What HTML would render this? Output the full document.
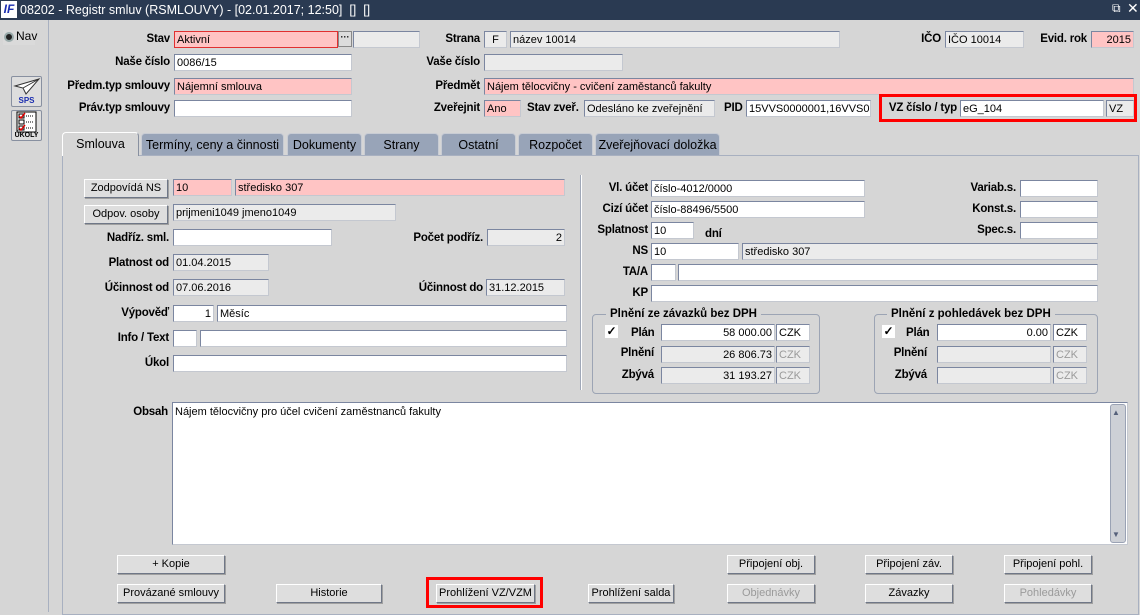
<!DOCTYPE html>
<html><head><meta charset="utf-8"><style>
*{margin:0;padding:0;box-sizing:border-box}
body{width:1140px;height:612px;background:#d6d6d6;font-family:"Liberation Sans",Arial,sans-serif;font-size:12px;color:#000;position:relative;overflow:hidden}
.a{position:absolute}
.l{position:absolute;font-weight:bold;font-size:11.5px;letter-spacing:-0.2px;white-space:nowrap;text-align:right;line-height:16px}
.f{position:absolute;height:17px;border:1px solid #7b86a0;border-right-color:#c4c8d0;border-bottom-color:#c4c8d0;background:#fff;font-size:11px;padding:0 2px;line-height:16px;white-space:nowrap;overflow:hidden}
.p{background:#ffc4c4}
.g{background:#ebebeb}
.r{text-align:right}
.b{position:absolute;height:19px;background:#dedede;border:1px solid;border-color:#fff #6f7787 #6f7787 #fff;box-shadow:1px 1px 0 #a0a0a0;text-align:center;font-size:11px;line-height:17px;white-space:nowrap}
.d{color:#9a9a9a}
.t{position:absolute;top:133px;height:22px;background:#98a4b8;border:1px solid #c8ccd4;border-bottom:none;border-radius:4px 4px 0 0;text-align:center;line-height:22px;font-size:12.5px}
.gb{position:absolute;border:1px solid #9ca4b4;border-radius:4px}
.gt{position:absolute;background:#d6d6d6;font-weight:bold;font-size:11.5px;padding:0 4px;line-height:14px}
.cb{position:absolute;width:13px;height:13px;background:#fff;font-size:12px;line-height:12px;text-align:center;font-weight:bold}
</style></head><body>
<div class="a" style="left:0;top:0;width:1140px;height:20px;background:#2a3a52"></div>
<div class="a" style="left:1px;top:1px;width:16px;height:17px;background:#fff;color:#1a2db0;font-weight:bold;font-style:italic;font-size:12px;line-height:17px;text-align:center">IF</div>
<div class="a" style="left:20px;top:2px;color:#fff;font-size:12.5px;line-height:16px">08202 - Registr smluv (RSMLOUVY) - [02.01.2017; 12:50]&nbsp; []&nbsp; []</div>
<div class="a" style="left:1112px;top:1px;color:#fff;font-size:12px">⧉</div>
<div class="a" style="left:1127px;top:0px;color:#fff;font-size:14px">✕</div>
<div class="a" style="left:48px;top:20px;width:1px;height:592px;background:#a8b0c0"></div>
<div class="a" style="left:3px;top:30px;width:32px;height:15px;background:#dadada"></div>
<div class="a" style="left:4px;top:32px;width:10px;height:10px;border-radius:50%;background:#222;border:2px solid #9aa"></div>
<div class="a" style="left:16px;top:29px;font-size:12px">Nav</div>
<div class="a" style="left:11px;top:76px;width:31px;height:31px;background:#dedede;border:1px solid #8890a0;border-radius:2px">
<svg width="29" height="20" viewBox="0 0 29 20"><path d="M3 9 L27 2 L14 17 L11 11 Z" fill="#fff" stroke="#333"/><path d="M11 11 L27 2" stroke="#333"/></svg>
<div style="position:absolute;left:0;right:0;top:19px;text-align:center;color:#1a2db0;font-size:8px;font-weight:bold">SPS</div></div>
<div class="a" style="left:11px;top:110px;width:31px;height:31px;background:#dedede;border:1px solid #8890a0;border-radius:2px">
<svg width="29" height="22" viewBox="0 0 29 22"><rect x="5" y="1" width="19" height="20" fill="#fff" stroke="#000"/><rect x="7" y="3" width="5" height="4" fill="none" stroke="#000"/><path d="M7 5 L9 7 L13 2" stroke="#d00" fill="none" stroke-width="1.5"/><rect x="7" y="9" width="5" height="4" fill="none" stroke="#000"/><rect x="7" y="15" width="5" height="4" fill="none" stroke="#000"/><path d="M7 17 L9 19 L13 14" stroke="#d00" fill="none" stroke-width="1.5"/><path d="M14 5h8M14 11h8M14 17h8" stroke="#000" stroke-dasharray="1 1"/></svg>
<div style="position:absolute;left:0;right:0;top:21px;text-align:center;font-size:7px;font-weight:bold">ÚKOLY</div></div>

<div class="l" style="right:970px;top:31px">Stav</div>
<div class="f p" style="left:174px;top:31px;width:164px;border-color:#e03030">Aktivní</div>
<div class="a" style="left:338px;top:31px;width:14px;height:16px;background:#dcdcdc;border:1px solid #888;font-size:9px;line-height:10px;text-align:center;font-weight:bold">···</div>
<div class="f g" style="left:353px;top:31px;width:67px"></div>
<div class="l" style="right:970px;top:54px">Naše číslo</div>
<div class="f" style="left:174px;top:54px;width:178px">0086/15</div>
<div class="l" style="right:970px;top:78px">Předm.typ smlouvy</div>
<div class="f p" style="left:174px;top:78px;width:178px">Nájemní smlouva</div>
<div class="l" style="right:970px;top:100px">Práv.typ smlouvy</div>
<div class="f" style="left:174px;top:100px;width:178px"></div>

<div class="l" style="right:660px;top:31px">Strana</div>
<div class="f g" style="left:484px;top:31px;width:23px;text-align:center">F</div>
<div class="f g" style="left:510px;top:31px;width:330px">název 10014</div>
<div class="l" style="right:660px;top:54px">Vaše číslo</div>
<div class="f g" style="left:484px;top:54px;width:139px"></div>
<div class="l" style="right:660px;top:78px">Předmět</div>
<div class="f p" style="left:484px;top:78px;width:650px">Nájem tělocvičny - cvičení zaměstanců fakulty</div>
<div class="l" style="right:660px;top:100px">Zveřejnit</div>
<div class="f p" style="left:484px;top:100px;width:37px">Ano</div>
<div class="l" style="left:527px;top:100px">Stav zveř.</div>
<div class="f g" style="left:584px;top:100px;width:131px">Odesláno ke zveřejnění</div>
<div class="l" style="left:724px;top:100px">PID</div>
<div class="f" style="left:746px;top:100px;width:125px">15VVS0000001,16VVS0</div>
<div class="a" style="left:879px;top:94px;width:258px;height:28px;border:3px solid #f00"></div>
<div class="l" style="right:183px;top:100px">VZ číslo / typ</div>
<div class="f" style="left:960px;top:100px;width:144px">eG_104</div>
<div class="f g" style="left:1106px;top:100px;width:28px">VZ</div>
<div class="l" style="right:199px;top:31px">IČO</div>
<div class="f g" style="left:945px;top:31px;width:79px">IČO 10014</div>
<div class="l" style="right:53px;top:31px">Evid. rok</div>
<div class="f p r" style="left:1091px;top:31px;width:43px">2015</div>

<div class="a" style="left:62px;top:155px;width:1077px;height:460px;border:1px solid #a8b0c0;background:#d6d6d6"></div>
<div class="t" style="left:62px;width:77px;background:#d6d6d6;border-color:#fff #8890a0 #d6d6d6 #fff;height:24px;top:132px">Smlouva</div>
<div class="t" style="left:141px;width:143px">Termíny, ceny a činnosti</div>
<div class="t" style="left:287px;width:75px">Dokumenty</div>
<div class="t" style="left:364px;width:75px">Strany</div>
<div class="t" style="left:441px;width:75px">Ostatní</div>
<div class="t" style="left:518px;width:75px">Rozpočet</div>
<div class="t" style="left:595px;width:125px">Zveřejňovací doložka</div>

<div class="b" style="left:84px;top:179px;width:84px">Zodpovídá NS</div>
<div class="f p" style="left:173px;top:179px;width:59px">10</div>
<div class="f p" style="left:235px;top:179px;width:330px">středisko 307</div>
<div class="b" style="left:84px;top:205px;width:84px">Odpov. osoby</div>
<div class="f g" style="left:173px;top:204px;width:223px">prijmeni1049 jmeno1049</div>
<div class="l" style="right:971px;top:230px">Nadříz. sml.</div>
<div class="f" style="left:173px;top:229px;width:159px"></div>
<div class="l" style="right:657px;top:230px">Počet podříz.</div>
<div class="f g r" style="left:487px;top:229px;width:78px">2</div>
<div class="l" style="right:971px;top:255px">Platnost od</div>
<div class="f g" style="left:173px;top:254px;width:96px">01.04.2015</div>
<div class="l" style="right:971px;top:280px">Účinnost od</div>
<div class="f g" style="left:173px;top:279px;width:96px">07.06.2016</div>
<div class="l" style="right:657px;top:280px">Účinnost do</div>
<div class="f g" style="left:486px;top:279px;width:79px">31.12.2015</div>
<div class="l" style="right:971px;top:305px">Výpověď</div>
<div class="f r" style="left:173px;top:305px;width:41px">1</div>
<div class="f" style="left:217px;top:305px;width:350px">Měsíc</div>
<div class="l" style="right:971px;top:330px">Info / Text</div>
<div class="f" style="left:173px;top:330px;width:24px"></div>
<div class="f" style="left:200px;top:330px;width:367px"></div>
<div class="l" style="right:971px;top:355px">Úkol</div>
<div class="f" style="left:173px;top:355px;width:394px"></div>
<div class="a" style="left:580px;top:175px;width:2px;height:215px;background:#fff;border-left:1px solid #a0a8b8"></div>

<div class="l" style="right:492px;top:180px">Vl. účet</div>
<div class="f" style="left:651px;top:180px;width:214px">číslo-4012/0000</div>
<div class="l" style="right:492px;top:201px">Cizí účet</div>
<div class="f" style="left:651px;top:201px;width:214px">číslo-88496/5500</div>
<div class="l" style="right:492px;top:222px">Splatnost</div>
<div class="f" style="left:651px;top:222px;width:43px">10</div>
<div class="l" style="left:705px;top:226px">dní</div>
<div class="l" style="right:492px;top:243px">NS</div>
<div class="f" style="left:651px;top:243px;width:88px">10</div>
<div class="f g" style="left:742px;top:243px;width:356px">středisko 307</div>
<div class="l" style="right:492px;top:264px">TA/A</div>
<div class="f" style="left:651px;top:264px;width:25px"></div>
<div class="f" style="left:678px;top:264px;width:420px"></div>
<div class="l" style="right:492px;top:285px">KP</div>
<div class="f" style="left:651px;top:285px;width:447px"></div>
<div class="l" style="right:124px;top:180px">Variab.s.</div>
<div class="f" style="left:1020px;top:180px;width:78px"></div>
<div class="l" style="right:124px;top:201px">Konst.s.</div>
<div class="f" style="left:1020px;top:201px;width:78px"></div>
<div class="l" style="right:124px;top:222px">Spec.s.</div>
<div class="f" style="left:1020px;top:222px;width:78px"></div>

<div class="gb" style="left:592px;top:314px;width:228px;height:80px"></div>
<div class="gt" style="left:606px;top:307px">Plnění ze závazků bez DPH</div>
<div class="cb" style="left:605px;top:325px">✓</div>
<div class="l" style="left:631px;top:325px">Plán</div>
<div class="f r" style="left:661px;top:324px;width:114px">58 000.00</div>
<div class="f" style="left:776px;top:324px;width:34px">CZK</div>
<div class="l" style="right:486px;top:345px">Plnění</div>
<div class="f g r" style="left:661px;top:346px;width:114px">26 806.73</div>
<div class="f g d" style="left:776px;top:346px;width:34px">CZK</div>
<div class="l" style="right:486px;top:367px">Zbývá</div>
<div class="f g r" style="left:661px;top:367px;width:114px">31 193.27</div>
<div class="f g d" style="left:776px;top:367px;width:34px">CZK</div>
<div class="gb" style="left:874px;top:314px;width:224px;height:80px"></div>
<div class="gt" style="left:887px;top:307px">Plnění z pohledávek bez DPH</div>
<div class="cb" style="left:882px;top:325px">✓</div>
<div class="l" style="left:906px;top:325px">Plán</div>
<div class="f r" style="left:937px;top:324px;width:114px">0.00</div>
<div class="f" style="left:1053px;top:324px;width:34px">CZK</div>
<div class="l" style="right:213px;top:345px">Plnění</div>
<div class="f g" style="left:937px;top:346px;width:114px"></div>
<div class="f g d" style="left:1053px;top:346px;width:34px">CZK</div>
<div class="l" style="right:213px;top:367px">Zbývá</div>
<div class="f g" style="left:937px;top:367px;width:114px"></div>
<div class="f g d" style="left:1053px;top:367px;width:34px">CZK</div>

<div class="l" style="right:972px;top:404px">Obsah</div>
<div class="f" style="left:172px;top:402px;width:956px;height:143px;padding-top:1px">Nájem tělocvičny pro účel cvičení zaměstnanců fakulty</div>
<div class="a" style="left:1110px;top:404px;width:16px;height:139px;background:#cdd0d6;border:1px solid #9aa2b4;border-radius:3px"></div>
<div class="a" style="left:1112px;top:408px;font-size:8px;color:#55607a">▲</div>
<div class="a" style="left:1112px;top:530px;font-size:8px;color:#55607a">▼</div>

<div class="b" style="left:117px;top:555px;width:108px">+ Kopie</div>
<div class="b" style="left:727px;top:555px;width:88px">Připojení obj.</div>
<div class="b" style="left:865px;top:555px;width:88px">Připojení záv.</div>
<div class="b" style="left:1004px;top:555px;width:88px">Připojení pohl.</div>
<div class="b" style="left:117px;top:584px;width:108px">Provázané smlouvy</div>
<div class="b" style="left:276px;top:584px;width:106px">Historie</div>
<div class="a" style="left:426px;top:577px;width:117px;height:31px;border:3px solid #f00"></div>
<div class="b" style="left:436px;top:584px;width:99px">Prohlížení VZ/VZM</div>
<div class="b" style="left:588px;top:584px;width:86px">Prohlížení salda</div>
<div class="b d" style="left:727px;top:584px;width:88px">Objednávky</div>
<div class="b" style="left:865px;top:584px;width:88px">Závazky</div>
<div class="b d" style="left:1004px;top:584px;width:88px">Pohledávky</div>
</body></html>
